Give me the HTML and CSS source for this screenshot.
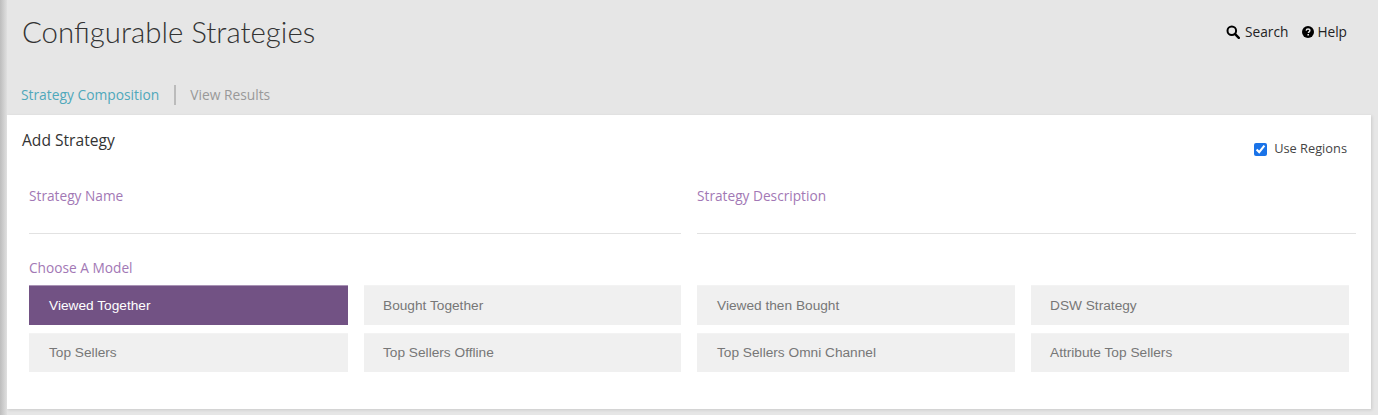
FILE: index.html
```html
<!DOCTYPE html>
<html lang="en">
<head>
<meta charset="utf-8">
<title>Configurable Strategies</title>
<link rel="stylesheet" href="styles.css">
</head>
<body>
<div class="edge"></div>
<div class="page">
  <header class="topbar">
    <h1 class="title">Configurable Strategies</h1>
    <nav class="actions">
      <a class="action action-search">
        <svg class="icon" viewBox="0 0 14 14" width="14" height="14"><circle cx="5.8" cy="5.8" r="4.3" fill="none" stroke="#000" stroke-width="2"/><path d="M8.9 8.9L12.8 12.8" stroke="#000" stroke-width="2.4" stroke-linecap="round"/></svg>
        <span>Search</span>
      </a>
      <a class="action action-help">
        <svg class="icon" viewBox="0 0 12 12" width="12" height="12"><circle cx="6" cy="6" r="6" fill="#000"/><path d="M4.2 4.6C4.3 3.5 5 3 6 3s1.9.6 1.9 1.6c0 1.3-1.5 1.3-1.5 2.4" fill="none" stroke="#e6e6e6" stroke-width="1.4"/><rect x="5.4" y="8" width="1.6" height="1.5" fill="#e6e6e6"/></svg>
        <span>Help</span>
      </a>
    </nav>
  </header>
  <div class="tabs">
    <a class="tab tab-active">Strategy Composition</a>
    <span class="tab-sep"></span>
    <a class="tab">View Results</a>
  </div>
  <main class="panel">
    <div class="panel-head">
      <h2 class="panel-title">Add Strategy</h2>
      <label class="check"><input type="checkbox" checked class="check-box"><span class="check-text">Use Regions</span></label>
    </div>
    <div class="fields">
      <div class="field"><div class="label">Strategy Name</div><div class="field-line"></div></div>
      <div class="field"><div class="label">Strategy Description</div><div class="field-line"></div></div>
    </div>
    <div class="label model-label">Choose A Model</div>
    <div class="models">
      <button class="model model-on">Viewed Together</button>
      <button class="model">Bought Together</button>
      <button class="model">Viewed then Bought</button>
      <button class="model">DSW Strategy</button>
      <button class="model">Top Sellers</button>
      <button class="model">Top Sellers Offline</button>
      <button class="model">Top Sellers Omni Channel</button>
      <button class="model">Attribute Top Sellers</button>
    </div>
  </main>
</div>
</body>
</html>
```
FILE: styles.css
```css
* { box-sizing: border-box; }
html, body { margin: 0; height: 415px; overflow: hidden; }
body { background: #e6e6e6; font-family: "Open Sans", sans-serif; position: relative; }
.edge { position: absolute; left: 0; top: 0; bottom: 0; width: 7px; background: linear-gradient(to right, #bdbdbd, #e0e0e0); }
.page { padding-left: 7px; padding-right: 7px; }
.topbar { height: 78px; display: flex; justify-content: space-between; align-items: flex-start; padding: 0 24px 0 15px; }
.title { margin: 12px 0 0; font-family: Lato, sans-serif; font-weight: 300; font-size: 29.4px; line-height: 40px; color: #333; }
.actions { display: flex; align-items: center; gap: 14px; margin-top: 22px; font-size: 13.7px; line-height: 20px; color: #222; }
.action { display: flex; align-items: center; }
.action-search { gap: 5px; }
.action-help { gap: 3px; margin-top: -1px; }
.tabs { height: 38px; width: 280px; display: flex; align-items: center; padding: 0 0 3px 14px; font-size: 13.8px; line-height: 20px; color: #999; border-bottom: 1px solid #dcdcdc; }
.tab-active { color: #4fa8bb; }
.tab-sep { width: 2px; height: 20px; background: #bbb; margin: 0 14px 0 15px; }
.panel { background: #fff; height: 294px; margin-top: -1px; padding: 15px 15px 0; box-shadow: 1px 1px 3px rgba(0,0,0,.12); }
.panel-head { display: flex; justify-content: space-between; align-items: flex-start; height: 57px; padding-right: 9px; }
.panel-title { margin: 0; font-size: 15.6px; font-weight: 400; line-height: 21px; color: #333; }
.check { display: flex; align-items: center; gap: 7px; margin-top: 10px; font-size: 12.8px; line-height: 16px; color: #444; }
.check-box { margin: 0; width: 13px; height: 13px; accent-color: #1a73e8; }
.check-text { padding-bottom: 2px; }
.fields { display: grid; grid-template-columns: 652px 659px; column-gap: 16px; margin-left: 7px; }
.label { font-size: 13.7px; line-height: 18px; color: #a278b5; }
.field { height: 76px; }
.field-line { height: 1px; background: #e2e2e2; margin-top: 28px; }
.model-label { margin: 0 0 0 7px; height: 22px; position: relative; top: -4px; }
.models { display: grid; grid-template-columns: 319px 317px 318px 318px; grid-template-rows: 40px 39px; gap: 8px 16px; margin-left: 7px; }
.model { border: 0; border-top: 1px solid #f3f3f3; background: #f0f0f0; color: #777; font-family: "Liberation Sans", sans-serif; font-size: 13.7px; text-align: left; padding: 0 0 1px 20px; margin: 0; }
.model:nth-child(even) { padding-left: 19px; }
.model-on { background: #725284; border-top-color: #a993b5; color: #fff; }
```
